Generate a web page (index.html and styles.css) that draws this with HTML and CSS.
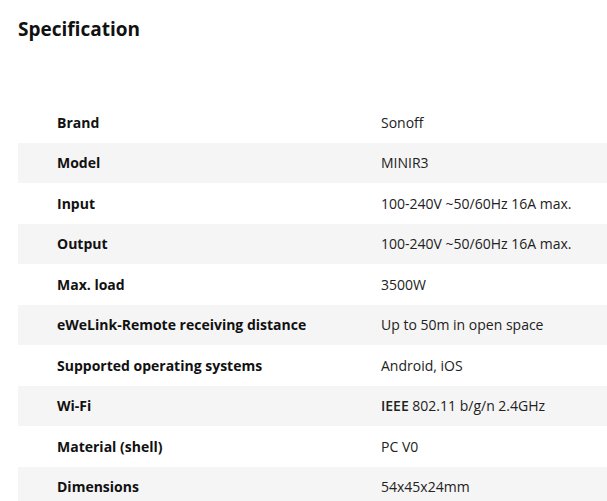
FILE: index.html
```html
<!DOCTYPE html>
<html>
<head>
<meta charset="utf-8">
<link rel="stylesheet" href="styles.css">
</head>
<body>
<div class="page">
  <h2 class="title">Specification</h2>
  <table class="spec">
    <tbody>
      <tr><td class="k">Brand</td><td class="v">Sonoff</td></tr>
      <tr><td class="k">Model</td><td class="v">MINIR3</td></tr>
      <tr><td class="k">Input</td><td class="v">100-240V ~50/60Hz 16A max.</td></tr>
      <tr><td class="k">Output</td><td class="v">100-240V ~50/60Hz 16A max.</td></tr>
      <tr><td class="k">Max. load</td><td class="v">3500W</td></tr>
      <tr><td class="k">eWeLink-Remote receiving distance</td><td class="v">Up to 50m in open space</td></tr>
      <tr><td class="k">Supported operating systems</td><td class="v">Android, iOS</td></tr>
      <tr><td class="k">Wi-Fi</td><td class="v"><span class="b">IEEE</span> 802.11 b/g/n 2.4GHz</td></tr>
      <tr><td class="k">Material (shell)</td><td class="v">PC V0</td></tr>
      <tr><td class="k">Dimensions</td><td class="v">54x45x24mm</td></tr>
    </tbody>
  </table>
</div>
</body>
</html>
```
FILE: styles.css
```css
html, body {
  margin: 0;
  padding: 0;
  background: #fff;
}
body {
  font-family: "Open Sans", "Noto Sans", sans-serif;
  color: #222;
  overflow: hidden;
}
.page {
  padding: 17px 0 0 18px;
}
.title {
  margin: 0;
  font-size: 19px;
  font-weight: 700;
  line-height: 24px;
  color: #111;
}
.spec {
  margin-top: 61px;
  width: 100%;
  border-collapse: collapse;
  font-size: 14px;
}
.spec tr {
  height: 40.5px;
}
.spec tr:nth-child(even) {
  background: #f5f5f5;
}
.spec td {
  padding: 0 0 0 39px;
  vertical-align: middle;
}
.spec .k {
  width: 285px;
  font-weight: 700;
  color: #111;
}
.spec .v {
  color: #222;
}
.spec .b {
  font-weight: 600;
}
```
